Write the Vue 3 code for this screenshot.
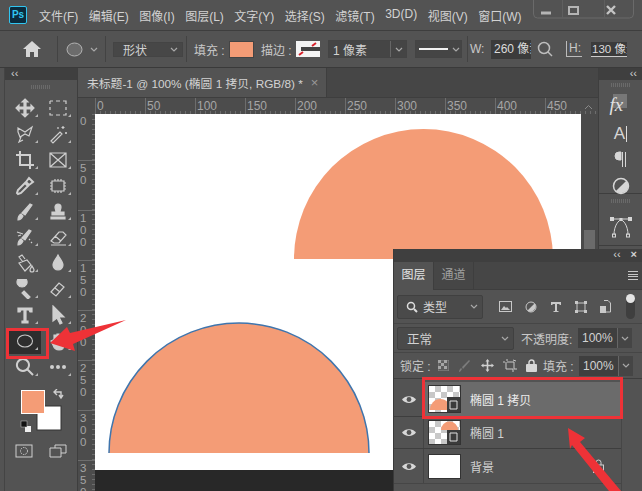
<script setup>
const menus = ["文件(F)", "编辑(E)", "图像(I)", "图层(L)", "文字(Y)", "选择(S)", "滤镜(T)", "3D(D)", "视图(V)", "窗口(W)"];
const hMarks = [0, 50, 100, 150, 200, 250, 300, 350, 400, 450];
const vMarks = ["0", "50", "100", "150", "200", "250", "300", "350"];

// left toolbar, two columns per row
const tools = [
  { d: "M10 1l3 3h-2v5h5v-2l3 3-3 3v-2h-5v5h2l-3 3-3-3h2v-5H4v2l-3-3 3-3v2h5V4H7z", fill: true },
  { d: "M2 3h3M8 3h4M15 3h3v3M18 9v3M18 15v2h-3M12 17H8M5 17H2v-2M2 12V9M2 6V3", fill: false },
  { d: "M3 4l7 4 7-5-3 9-4-2-5 3-2-5zM6 13l-2 5 4-2", fill: false },
  { d: "M3 17L12 8l2 2-9 9zM15 2v3M13.500 3.500h3M18 8v2M17 9h2M10 3v2", fill: false },
  { d: "M1 5h4V1M5 5h10v10M15 19v-4H5V5M15 15h4", fill: false, heavy: true },
  { d: "M2 3h16v14H2zM2 3l16 14M18 3L2 17", fill: false },
  { d: "M3 18l-1-1 1-3 7-7 3 3-7 7zM11 6l3-4 4 4-4 3z", fill: false, heavy: true },
  { d: "M4 5h12v10H4zM2 7h2M2 10h2M2 13h2M16 7h2M16 10h2M16 13h2M7 3v2M10 3v2M13 3v2M7 15v2M10 15v2M13 15v2", fill: false },
  { d: "M3 18c0-3 1-5 3-6l2 2c-1 2-3 4-5 4zM7 11l8-9 2 1-7 10z", fill: true },
  { d: "M7 5a3 3 0 1 1 6 0c0 2-1 3-1 5h4v3H4v-3h4c0-2-1-3-1-5zM3 15h14v2H3z", fill: true },
  { d: "M3 18c0-3 1-5 3-6l2 2c-1 2-3 4-5 4zM7 11l7-8 2 1-6 9zM2 5l6 2M3 9l3-1M14 12l1 1M16 15l1 1", fill: true },
  { d: "M3 14l8-9h4l3 3-7 8H6zM3 18h15M7 9l6 5", fill: false },
  { d: "M8 9L4 4l3-2 3 4M4 10l8-3 4 5-6 6zM17 13c1 2 2 3 2 4a2 2 0 0 1-4 0c0-1 1-2 2-4z", fill: false },
  { d: "M10 2c2 4 5 7 5 10a5 5 0 0 1-10 0c0-3 3-6 5-10z", fill: true },
  { d: "M7 8a5 5 0 1 1 0.100 0zM9 12l6 6-2 2-6-6z", fill: true },
  { d: "M3 13l8-9 5 4-8 9zM7 9l5 4", fill: false },
  { d: "M3 3h14v4h-2l-1-2h-3v11h2v2H7v-2h2V5H6L5 7H3z", fill: true },
  { d: "M5 1l11 11h-5l3 6-2 1-3-6-4 3z", fill: true },
  { ellipse: true, active: true },
  { d: "M6 8V4h2v4h1V3h2v5h1V4h2v7l2-2v5c0 3-2 5-5 5s-5-2-6-5l-2-4 2-1z", fill: true },
  { d: "M8 2a6 6 0 1 1-0.100 0zM12 12l6 6", fill: false, heavy: true },
  { dots: true },
];
</script>

<template>
  <div class="ps">
    <header class="menubar">
      <div class="logo">Ps</div>
      <nav class="menus">
        <span v-for="m in menus" :key="m">{{ m }}</span>
      </nav>
      <div class="winbtns">
        <svg width="101" height="19" viewBox="0 0 101 19">
          <path d="M0.500 0v14q0 4 4 4h92q4 0 4-4V0" fill="none" stroke="#6a6a6a" />
          <path d="M29.500 0v18M71.500 0v18" stroke="#5f5f5f" />
          <path d="M8 13h10" stroke="#b5b5b5" stroke-width="3" />
          <rect x="36" y="7" width="9" height="7" fill="none" stroke="#b5b5b5" stroke-width="2" />
          <path d="M74 6l8 8M82 6l-8 8" stroke="#c4c4c4" stroke-width="2.400" />
        </svg>
      </div>
    </header>

    <section class="options">
      <svg class="home" width="18" height="16" viewBox="0 0 18 16">
        <path d="M9 0L0 8h3v8h4v-5h4v5h4V8h3z" fill="#d6d6d6" />
      </svg>
      <i class="sep"></i>
      <svg class="shape-ico" width="17" height="15" viewBox="0 0 17 15">
        <ellipse cx="8.500" cy="7.500" rx="7.500" ry="6.500" fill="#6c6c6c" stroke="#b3b3b3" />
      </svg>
      <svg class="chev opt-chev" width="8" height="5" viewBox="0 0 8 5"><path d="M1 1l3 3 3-3" /></svg>
      <i class="sep"></i>
      <div class="dd shape-dd"><span>形状</span><svg class="chev" width="8" height="5" viewBox="0 0 8 5"><path d="M1 1l3 3 3-3" /></svg></div>
      <i class="sep"></i>
      <span class="lbl fill-lbl">填充 :</span>
      <div class="swatch"></div>
      <span class="lbl stroke-lbl">描边 :</span>
      <svg class="stroke-ico" width="24" height="16" viewBox="0 0 24 16">
        <rect width="24" height="16" fill="#f4f4f4" />
        <rect x="5" y="6" width="19" height="4" fill="#444" />
        <path d="M16 5l4-3M3 14l4-3" stroke="#d8212a" stroke-width="2" />
      </svg>
      <div class="dd width-dd"><span class="dd-val">1 像素</span><b><svg class="chev" width="8" height="5" viewBox="0 0 8 5"><path d="M1 1l3 3 3-3" /></svg></b></div>
      <div class="dd line-dd"><i></i><svg class="chev" width="8" height="5" viewBox="0 0 8 5"><path d="M1 1l3 3 3-3" /></svg></div>
      <i class="sep line-sep"></i>
      <span class="lbl w-lbl">W:</span>
      <div class="num w-num">260 像素</div>
      <svg class="search" width="16" height="16" viewBox="0 0 16 16">
        <circle cx="7" cy="7" r="5.500" fill="none" stroke="#bdbdbd" stroke-width="1.500" />
        <path d="M11 11l4 4" stroke="#bdbdbd" stroke-width="1.500" />
      </svg>
      <span class="lbl h-lbl">H:</span>
      <div class="num h-num">130 像素</div>
    </section>

    <main class="body">
      <aside class="toolbar">
        <div class="collapse">‹‹</div>
        <div class="grip"></div>
        <div class="toolgrid">
          <div v-for="(t, i) in tools" :key="i" class="tool" :class="{ active: t.active }">
            <svg width="20" height="20" viewBox="0 0 20 20">
              <ellipse v-if="t.ellipse" cx="10" cy="10" rx="7.500" ry="6" fill="none" stroke="#c8c8c8" stroke-width="1.100" />
              <g v-else-if="t.dots" fill="#cfcfcf"><circle cx="4" cy="10" r="2" /><circle cx="10" cy="10" r="2" /><circle cx="16" cy="10" r="2" /></g>
              <path v-else :d="t.d" :fill="t.fill ? '#cfcfcf' : 'none'" stroke="#cfcfcf" :stroke-width="t.heavy ? 2 : 1.200" />
            </svg>
          </div>
        </div>
        <div class="colors">
          <svg width="60" height="46" viewBox="0 0 60 46">
            <rect x="17" y="17" width="24" height="24" fill="#fff" stroke="#333" />
            <rect x="1.500" y="1.500" width="23" height="23" fill="#f49c76" stroke="#fff" />
            <path d="M34 3h7v5M39 6l2 3 2-3M37 0l-3 3 3 3" fill="none" stroke="#cfcfcf" stroke-width="1.400" />
            <rect x="5" y="37" width="6" height="6" fill="#eee" />
            <rect x="1" y="32" width="6" height="6" fill="#111" stroke="#ccc" stroke-width=".5" />
          </svg>
        </div>
        <div class="modes">
          <svg width="18" height="14" viewBox="0 0 18 14">
            <rect x="1" y="1" width="16" height="12" fill="none" stroke="#d0d0d0" />
            <circle cx="9" cy="7" r="3.500" fill="none" stroke="#d0d0d0" stroke-dasharray="1.500 1" />
          </svg>
          <svg width="18" height="14" viewBox="0 0 18 14">
            <path d="M6 4V1h11v8h-5M1 4h11v9H1z" fill="none" stroke="#d0d0d0" />
          </svg>
        </div>
      </aside>

      <div class="center">
        <div class="tabbar">
          <div class="tab">未标题-1 @ 100% (椭圆 1 拷贝, RGB/8) *<span class="tab-x">×</span></div>
        </div>
        <div class="hruler">
          <span v-for="m in hMarks" :key="m">{{ m }}</span>
          <svg class="ruler-up" width="9" height="6" viewBox="0 0 9 6"><path d="M1 5l3.500-3.500L8 5" fill="none" stroke="#8a8a8a" /></svg>
        </div>
        <div class="work">
          <div class="vruler">
            <span v-for="m in vMarks" :key="m">{{ m }}</span>
          </div>
          <div class="stage">
            <svg class="canvas" width="486" height="356" viewBox="0 0 486 356">
              <rect width="486" height="356" fill="#fff" />
              <path d="M199 145a129.500 130 0 0 1 259 0z" fill="#f49c76" />
              <path d="M14 339a130 130 0 0 1 260 0z" fill="#f49c76" />
              <path d="M14 339a130 130 0 0 1 260 0" fill="none" stroke="#3f75ad" stroke-width="1.500" />
            </svg>
          </div>
          <div class="scroll"><i></i></div>
        </div>
      </div>

      <aside class="dock">
        <div class="collapse right">‹‹</div>
        <div class="dock-box">
          <div class="grip small"></div>
          <div class="fx"><i></i><em>fx</em></div>
          <div class="dock-a">A<i></i></div>
          <svg class="dock-ico" width="14" height="16" viewBox="0 0 14 16"><path d="M7 1H5a4 4 0 0 0 0 8h2zM8.500 1v15M11.500 1v15" fill="#d6d6d6" stroke="#d6d6d6" /></svg>
          <svg class="dock-ico" width="18" height="18" viewBox="0 0 18 18">
            <circle cx="9" cy="9" r="7.500" fill="none" stroke="#d6d6d6" stroke-width="1.500" />
            <path d="M14.300 3.700A7.500 7.500 0 0 1 3.700 14.300z" fill="#d6d6d6" />
          </svg>
        </div>
        <div class="dock-box second">
          <div class="grip small"></div>
          <svg class="dock-ico" width="24" height="22" viewBox="0 0 24 22">
            <path d="M5 3h14M5 19C5 9 10 4 12 4s7 5 7 15" fill="none" stroke="#d6d6d6" />
            <rect x="1" y="1" width="4" height="4" fill="#d6d6d6" /><rect x="19" y="1" width="4" height="4" fill="#d6d6d6" />
            <rect x="10.500" y="2" width="3" height="3" fill="#d6d6d6" />
            <rect x="3.500" y="18" width="3" height="3" fill="none" stroke="#d6d6d6" /><rect x="17.500" y="18" width="3" height="3" fill="none" stroke="#d6d6d6" />
          </svg>
        </div>
      </aside>
    </main>

    <section class="panel">
      <div class="panel-top">
        <span>‹‹</span><span class="pclose">×</span>
      </div>
      <div class="ptabs">
        <div class="ptab on">图层</div>
        <div class="ptab">通道</div>
        <div class="pmenu"><i></i><i></i><i></i><i></i></div>
      </div>
      <div class="prow filter">
        <div class="pselect kind">
          <svg width="12" height="12" viewBox="0 0 12 12"><circle cx="5" cy="5" r="3.500" fill="none" stroke="#ddd" stroke-width="1.500" /><path d="M8 8l3 3" stroke="#ddd" stroke-width="2" /></svg>
          <span>类型</span>
          <svg class="chev" width="8" height="5" viewBox="0 0 8 5"><path d="M1 1l3 3 3-3" /></svg>
        </div>
        <div class="ficons">
          <svg width="13" height="11" viewBox="0 0 13 11"><rect x=".5" y=".5" width="12" height="10" fill="none" stroke="#c8c8c8" /><path d="M2 9l3-4 2 2 1-1 3 3z" fill="#c8c8c8" /></svg>
          <svg width="12" height="12" viewBox="0 0 12 12"><circle cx="6" cy="6" r="5" fill="none" stroke="#c8c8c8" /><path d="M9.500 2.500a5 5 0 0 1-7 7z" fill="#c8c8c8" /></svg>
          <svg width="12" height="12" viewBox="0 0 12 12"><path d="M1 1h10v3h-1L9 3H7v7h1.500v1h-5v-1H5V3H3L2 4H1z" fill="#c8c8c8" /></svg>
          <svg width="12" height="12" viewBox="0 0 12 12"><path d="M2 2h8v8H2z" fill="none" stroke="#c8c8c8" /><path d="M0 0h3v3H0zM9 0h3v3H9zM0 9h3v3H0zM9 9h3v3H9z" fill="#c8c8c8" /></svg>
          <svg width="11" height="13" viewBox="0 0 11 13"><path d="M4 .5h4l2.500 2.500v9H4" fill="none" stroke="#c8c8c8" /><rect y="6" width="6" height="7" fill="#c8c8c8" /></svg>
        </div>
        <div class="toggle"><i></i></div>
      </div>
      <div class="prow blend">
        <div class="pselect normal"><span>正常</span><svg class="chev" width="8" height="5" viewBox="0 0 8 5"><path d="M1 1l3 3 3-3" /></svg></div>
        <span class="plbl">不透明度:</span>
        <div class="pnum"><span>100%</span><b><svg class="chev" width="8" height="5" viewBox="0 0 8 5"><path d="M1 1l3 3 3-3" /></svg></b></div>
      </div>
      <div class="prow lock">
        <span class="plbl">锁定 :</span>
        <div class="licons">
          <svg width="11" height="11" viewBox="0 0 11 11"><rect width="11" height="11" fill="#5c5c5c" stroke="#888" /><path d="M0 0h3v3H0zM6 0h3v3H6zM3 3h3v3H3zM0 6h3v3H0zM6 6h3v3H6z" fill="#a5a5a5" /></svg>
          <svg width="14" height="14" viewBox="0 0 14 14"><path d="M1 13c0-2 1-3 2-4l1 1c-1 2-2 3-3 3zM4 8l7-7 1 1-7 8z" fill="#7c7c7c" /></svg>
          <svg width="13" height="13" viewBox="0 0 13 13"><path d="M6.500 0l2 2.500H7.300v3.200h3.200V4.500L13 6.500l-2.500 2V7.300H7.300v3.200h1.200l-2 2.500-2-2.500h1.200V7.300H2.500v1.200L0 6.500l2.500-2v1.200h3.200V2.500H4.500z" fill="#d0d0d0" /></svg>
          <svg width="14" height="13" viewBox="0 0 14 13"><path d="M0 3h2M4 0v2M4 3h7v7M3 3v7h7v3M11 10h3M10 1l3 1" fill="none" stroke="#c8c8c8" /></svg>
          <svg width="11" height="13" viewBox="0 0 11 13"><path d="M3 5V3.500a2.500 2.500 0 0 1 5 0V5" fill="none" stroke="#d6d6d6" stroke-width="1.500" /><rect y="5" width="11" height="8" rx="1" fill="#d6d6d6" /></svg>
        </div>
        <span class="plbl fill-p">填充 :</span>
        <div class="pnum"><span>100%</span><b><svg class="chev" width="8" height="5" viewBox="0 0 8 5"><path d="M1 1l3 3 3-3" /></svg></b></div>
      </div>
      <div class="layers">
        <div class="layer sel">
          <div class="eye"><svg width="14" height="9" viewBox="0 0 14 9"><path d="M0 4.500C3 0 11 0 14 4.500 11 9 3 9 0 4.500z" fill="#d8d8d8" /><circle cx="7" cy="4.500" r="2.400" fill="#555" /></svg></div>
          <div class="thumb brk">
            <svg width="31" height="26" viewBox="0 0 31 26">
              <path d="M3 24a11 11 0 0 1 22 0z" fill="#f49c76" transform="translate(-2 0) scale(.95 1)" />
              <rect x="18" y="11" width="13" height="15" fill="#3b3b3b" />
              <path d="M21 15h7v8h-7z" fill="none" stroke="#e0e0e0" />
            </svg>
          </div>
          <span class="lname">椭圆 1 拷贝</span>
        </div>
        <div class="layer second">
          <div class="eye"><svg width="14" height="9" viewBox="0 0 14 9"><path d="M0 4.500C3 0 11 0 14 4.500 11 9 3 9 0 4.500z" fill="#d8d8d8" /><circle cx="7" cy="4.500" r="2.400" fill="#555" /></svg></div>
          <div class="thumb">
            <svg width="31" height="23" viewBox="0 0 31 23">
              <path d="M12 9a8 8 0 0 1 17 0z" fill="#f49c76" />
              <rect x="18" y="9" width="13" height="14" fill="#3b3b3b" />
              <path d="M21 12h7v8h-7z" fill="none" stroke="#e0e0e0" />
            </svg>
          </div>
          <span class="lname">椭圆 1</span>
        </div>
        <div class="layer bg">
          <div class="eye"><svg width="14" height="9" viewBox="0 0 14 9"><path d="M0 4.500C3 0 11 0 14 4.500 11 9 3 9 0 4.500z" fill="#d8d8d8" /><circle cx="7" cy="4.500" r="2.400" fill="#555" /></svg></div>
          <div class="thumb white"></div>
          <span class="lname">背景</span>
          <svg class="lock-ico" width="11" height="14" viewBox="0 0 11 14"><path d="M3 6V3.500a2.500 2.500 0 0 1 5 0V6" fill="none" stroke="#cfcfcf" /><rect x=".5" y="6" width="10" height="7.500" fill="none" stroke="#cfcfcf" /></svg>
        </div>
      </div>
    </section>

    <!-- annotations on top of the screenshot -->
    <div class="mark tool-mark"></div>
    <div class="mark layer-mark"></div>
    <svg class="arrows" width="642" height="491" viewBox="0 0 642 491">
      <path d="M50 343L67 327l3 6 56-13-53 24 2 7z" fill="#ee3237" />
      <path d="M568 428l17 10-5 4 41 49h-12l-37-46-2 4z" fill="#ee3237" />
    </svg>
  </div>
</template>

<style scoped>
.ps {
  position: relative;
  width: 642px;
  height: 491px;
  overflow: hidden;
  display: flex;
  flex-direction: column;
  background: #535353;
  color: #d2d2d2;
  font-family: "Liberation Sans", "Noto Sans CJK SC", sans-serif;
  font-size: 12px;
}
.ps svg {
  flex: none;
}
.chev {
  fill: none;
  stroke: #a8a8a8;
  stroke-width: 1.200;
  flex: none;
}

/* menu bar */
.menubar {
  height: 30px;
  flex: none;
  display: flex;
  align-items: center;
  border-bottom: 1px solid #3e3e3e;
  padding-left: 9px;
  position: relative;
}
.logo {
  width: 16px;
  height: 16px;
  border: 1px solid #31c5f0;
  border-radius: 2px;
  background: #0b2b3d;
  color: #31c5f0;
  font-size: 10px;
  font-weight: bold;
  line-height: 16px;
  text-align: center;
}
.menus {
  display: flex;
  gap: 10.500px;
  margin-left: 12px;
  font-size: 12px;
  white-space: nowrap;
}
.winbtns {
  position: absolute;
  left: 533px;
  top: 0;
  height: 19px;
}

/* options bar */
.options {
  height: 36px;
  flex: none;
  display: flex;
  align-items: center;
  padding-left: 23px;
  border-bottom: 1px solid #3a3a3a;
  white-space: nowrap;
}
.sep {
  width: 1px;
  height: 26px;
  background: #434343;
  flex: none;
}
.home { margin-right: 16px; }
.shape-ico { margin-left: 8px; }
.opt-chev { margin: 0 7px 0 7px; }
.dd {
  display: flex;
  align-items: center;
  height: 15px;
  background: #474747;
  border: 1px solid #444;
  box-sizing: border-box;
  flex: none;
}
.shape-dd {
  width: 70px;
  margin: 0 3px 0 7px;
  justify-content: space-between;
  padding: 0 4px 0 9px;
  font-size: 12px;
}
.lbl { color: #c8c8c8; font-size: 12px; flex: none; box-sizing: border-box; }
.fill-lbl { margin-left: 7px; width: 35px; }
.swatch {
  width: 25px;
  height: 17px;
  background: #f49c76;
  border: 1px solid #444;
  box-sizing: border-box;
  flex: none;
}
.stroke-lbl { margin-left: 7px; width: 35px; }
.stroke-ico { margin-right: 8px; }
.width-dd {
  width: 79px;
  height: 18px;
  justify-content: space-between;
  background: #454545;
}
.dd-val { padding-left: 4px; }
.width-dd b {
  width: 15px;
  height: 100%;
  border-left: 1px solid #666;
  display: flex;
  align-items: center;
  justify-content: center;
}
.line-dd {
  width: 47px;
  height: 18px;
  margin-left: 8px;
  gap: 4px;
  padding-left: 3px;
  background: #454545;
}
.line-dd i { width: 29px; height: 2px; background: #f0f0f0; }
.line-sep { margin: 0 2px 0 5px; }
.num {
  background: #3b3b3b;
  height: 19px;
  line-height: 19px;
  overflow: hidden;
  flex: none;
  color: #dcdcdc;
  box-sizing: border-box;
}
.w-lbl { width: 21px; }
.w-num { width: 40px; padding-left: 3px; }
.search { margin: 0 13px 0 6px; }
.h-lbl {
  width: 16px;
  margin-right: 9px;
  border: 1px solid #bbb;
  border-top: 0;
  border-right: 0;
  line-height: 15px;
  padding-left: 2px;
}
.h-num {
  width: 36px;
  padding-left: 1px;
  font-size: 11.500px;
  border-bottom: 1px solid #ccc;
  height: 15px;
  line-height: 15px;
}

/* main */
.body {
  flex: 1;
  min-height: 0;
  display: flex;
}
.toolbar {
  width: 74px;
  margin-left: 4px;
  flex: none;
  border-left: 1px solid #444;
  border-right: 1px solid #3e3e3e;
  box-sizing: border-box;
  display: flex;
  flex-direction: column;
}
.collapse {
  height: 12px;
  background: #3f3f3f;
  color: #d0d0d0;
  font-size: 11px;
  line-height: 10px;
  padding-left: 6px;
  flex: none;
}
.grip {
  height: 4px;
  margin: 5px auto 6px;
  width: 20px;
  background: repeating-linear-gradient(90deg, #6a6a6a 0 1px, transparent 1px 2px);
  flex: none;
}
.toolgrid {
  display: grid;
  grid-template-columns: 33px 33px;
  grid-auto-rows: 25.900px;
  margin-left: 3px;
}
.tool {
  display: flex;
  align-items: center;
  justify-content: center;
  position: relative;
}
.tool::after {
  content: "";
  position: absolute;
  right: 3px;
  bottom: 4px;
  border-left: 3px solid transparent;
  border-bottom: 3px solid #b5b5b5;
}
.tool.active {
  background: #2e2e2e;
}
.colors {
  margin: 9px 0 0 15px;
  flex: none;
}
.colors svg { display: block; }
.modes {
  display: flex;
  gap: 16px;
  margin: 9px 0 0 10px;
}

.center {
  flex: 1;
  min-width: 0;
  display: flex;
  flex-direction: column;
}
.tabbar {
  height: 29px;
  flex: none;
  background: #464646;
  display: flex;
}
.tab {
  display: flex;
  align-items: center;
  padding-left: 9px;
  width: 249px;
  box-sizing: border-box;
  background: #535353;
  font-size: 11.800px;
  white-space: nowrap;
  border-right: 1px solid #3e3e3e;
}
.tab-x { margin-left: 8px; color: #999; font-size: 13px; }
.hruler {
  position: relative;
  height: 17px;
  flex: none;
  display: flex;
  padding-left: 17px;
  overflow: hidden;
  border-top: 1px solid #3e3e3e;
  box-sizing: border-box;
  background-color: #4c4c4c;
  background-image: repeating-linear-gradient(90deg, #6d6d6d 0 1px, transparent 1px 5px);
  background-size: 100% 3px;
  background-position: 17px bottom;
  background-repeat: no-repeat;
}
.hruler span {
  width: 50px;
  flex: none;
  box-sizing: border-box;
  border-left: 1px solid #6d6d6d;
  padding-left: 1px;
  font-size: 12px;
  line-height: 16px;
  color: #a5a5a5;
}
.ruler-up {
  position: absolute;
  right: 5px;
  top: 6px;
  background: #4c4c4c;
}
.work {
  flex: 1;
  min-height: 0;
  display: flex;
  background: #282828;
}
.vruler {
  width: 17px;
  flex: none;
  background-color: #4c4c4c;
  background-image: repeating-linear-gradient(180deg, #6d6d6d 0 1px, transparent 1px 5px);
  background-size: 3px 100%;
  background-position: right top;
  background-repeat: no-repeat;
  overflow: hidden;
}
.vruler span {
  display: block;
  height: 50px;
  box-sizing: border-box;
  border-top: 1px solid #6d6d6d;
  width: 17px;
  padding: 1px 8px 0 2px;
  font-size: 11.500px;
  line-height: 12px;
  color: #a5a5a5;
  word-break: break-all;
}
.vruler span:first-child { height: 46px; border-top: 0; }
.stage {
  flex: none;
  width: 486px;
}
.canvas { display: block; }
.scroll {
  flex: 1;
  background: #4a4a4a;
  height: 356px;
  padding-top: 116px;
  box-sizing: border-box;
}
.scroll i {
  display: block;
  height: 20px;
  margin: 0 3px;
  background: #6b6b6b;
}

/* right dock */
.dock {
  width: 44px;
  flex: none;
  border-left: 1px solid #3e3e3e;
  box-sizing: border-box;
  display: flex;
  flex-direction: column;
}
.collapse.right {
  text-align: right;
  padding: 0 5px 0 0;
  height: 12px;
  background: #3f3f3f;
}
.dock-box {
  display: flex;
  flex-direction: column;
  align-items: center;
  height: 113px;
  gap: 10px;
  padding-top: 2px;
  box-sizing: border-box;
  border-bottom: 1px solid #3e3e3e;
  margin-top: 1px;
}
.dock-box.second { height: 52px; margin-top: 0; gap: 13px; padding-top: 5px; }
.grip.small { margin: 0 0 -3px; }
.second .grip.small { margin: 0; }
.dock-ico { flex: none; }
.fx {
  position: relative;
  width: 24px;
  height: 22px;
  flex: none;
}
.fx i {
  position: absolute;
  left: 4px;
  top: 0;
  width: 14px;
  height: 14px;
  background: #777;
}
.fx em {
  position: absolute;
  left: 1px;
  top: 0;
  font-family: "Liberation Serif", serif;
  font-size: 19px;
  color: #e2e2e2;
}
.dock-a {
  font-size: 17px;
  display: flex;
  align-items: center;
  height: 15px;
  flex: none;
  color: #d6d6d6;
}
.dock-a i { width: 1px; height: 16px; background: #ddd; margin-left: 1px; }

/* layers panel */
.panel {
  position: absolute;
  left: 393px;
  top: 249px;
  width: 249px;
  height: 242px;
  background: #535353;
  border-left: 1px solid #3a3a3a;
  box-sizing: border-box;
  display: flex;
  flex-direction: column;
}
.panel-top {
  height: 13px;
  background: #3f3f3f;
  display: flex;
  justify-content: flex-end;
  gap: 10px;
  padding-right: 5px;
  font-size: 11px;
  line-height: 11px;
  flex: none;
}
.pclose { font-weight: bold; }
.ptabs {
  height: 28px;
  flex: none;
  display: flex;
  background: #464646;
  border-bottom: 1px solid #3e3e3e;
  box-sizing: border-box;
  align-items: stretch;
  position: relative;
}
.ptab {
  width: 39px;
  text-align: center;
  line-height: 26px;
  color: #9f9f9f;
  border-right: 1px solid #3e3e3e;
}
.ptab.on {
  color: #e4e4e4;
  background: #535353;
  height: 28px;
}
.pmenu {
  position: absolute;
  right: 4px;
  top: 9px;
  display: flex;
  flex-direction: column;
  gap: 1.500px;
}
.pmenu i { width: 10px; height: 1px; background: #c8c8c8; }
.prow {
  display: flex;
  align-items: center;
  flex: none;
}
.filter {
  height: 33px;
  padding-left: 3px;
  border-bottom: 1px solid #464646;
}
.pselect {
  display: flex;
  align-items: center;
  background: #4a4a4a;
  border: 1px solid #404040;
  border-radius: 2px;
  box-sizing: border-box;
}
.kind {
  width: 86px;
  height: 24px;
  padding: 0 4px 0 8px;
  gap: 5px;
}
.kind .chev { margin-left: auto; }
.ficons {
  display: flex;
  align-items: center;
  gap: 13px;
  margin-left: 16px;
}
.toggle {
  width: 9px;
  height: 25px;
  margin-left: 15px;
  border-radius: 5px;
  background: #3f3f3f;
  position: relative;
}
.toggle i {
  position: absolute;
  left: 0;
  top: 0;
  width: 9px;
  height: 9px;
  border-radius: 50%;
  background: #e4e4e4;
}
.blend {
  height: 28px;
  padding-left: 3px;
  border-bottom: 1px solid #464646;
}
.normal {
  width: 117px;
  height: 23px;
  padding: 0 4px 0 9px;
  justify-content: space-between;
  font-size: 12.500px;
}
.plbl { color: #c8c8c8; white-space: nowrap; }
.blend .plbl { margin: 0 5px 0 7px; width: 52px; }
.pnum {
  display: flex;
  width: 54px;
  height: 20px;
  align-items: center;
  background: #454545;
  flex: none;
}
.pnum span {
  width: 39px;
  background: #3f3f3f;
  line-height: 20px;
  padding-left: 4px;
  box-sizing: border-box;
}
.pnum b { flex: 1; display: flex; justify-content: center; border-left: 1px solid #666; height: 100%; align-items: center; }
.lock {
  height: 25px;
  padding-left: 6px;
  border-bottom: 1px solid #3e3e3e;
}
.lock .plbl { width: 36px; flex: none; }
.licons {
  display: flex;
  align-items: center;
  gap: 9px;
  margin-left: 2px;
  width: 104px;
}
.lock .fill-p { margin-left: 1px; }
.layers {
  flex: 1;
  background: #535353;
  margin-right: 20px;
  border-right: 1px solid #464646;
  padding-top: 3px;
}
.layer {
  display: flex;
  align-items: center;
  border-bottom: 1px solid #3e3e3e;
  height: 32px;
  position: relative;
}
.layer.sel { height: 34px; background: #6b6b6b; color: #ececec; }
.layer.second { height: 31px; }
.layer.bg { height: 34px; border-bottom: 1px solid #464646; }
.eye {
  width: 29px;
  height: 100%;
  flex: none;
  display: flex;
  align-items: center;
  justify-content: center;
  border-right: 1px solid #444;
  background: #535353;
}
.thumb {
  width: 31px;
  height: 23px;
  margin-left: 5px;
  flex: none;
  background-color: #fff;
  background-image: conic-gradient(#c8c8c8 25%, #fff 0 50%, #c8c8c8 0 75%, #fff 0);
  background-size: 12px 12px;
  outline: 1px solid #333;
}
.thumb svg { display: block; }
.thumb.brk { height: 26px; }
.thumb.white { background: #fff; height: 23px; }
.lname { margin-left: 10px; font-size: 12px; white-space: nowrap; }
.lock-ico { position: absolute; right: 17px; top: 10px; }

/* annotations */
.mark {
  position: absolute;
  border: 3px solid #ee3237;
  box-sizing: border-box;
}
.tool-mark { left: 6px; top: 328px; width: 43px; height: 31px; }
.layer-mark { left: 422px; top: 377px; width: 201px; height: 42px; }
.arrows {
  position: absolute;
  left: 0;
  top: 0;
  pointer-events: none;
}
</style>
